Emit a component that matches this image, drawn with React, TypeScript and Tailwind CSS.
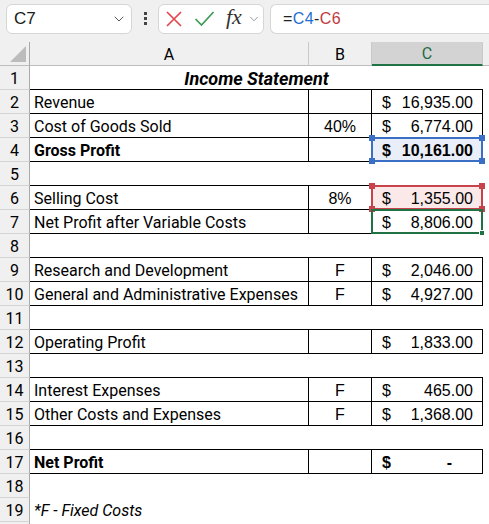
import { ChevronDown } from "lucide-react";

type Hl = "blue" | "red" | "green";

type Row = {
  n: number;
  a?: string;
  b?: string;
  c?: string;
  bold?: boolean;
  italic?: boolean;
  border?: boolean;
  title?: boolean;
  hl?: Hl;
};

const rows: Row[] = [
  { n: 1, a: "Income Statement", title: true },
  { n: 2, a: "Revenue", c: "16,935.00", border: true },
  { n: 3, a: "Cost of Goods Sold", b: "40%", c: "6,774.00", border: true },
  { n: 4, a: "Gross Profit", c: "10,161.00", bold: true, border: true, hl: "blue" },
  { n: 5 },
  { n: 6, a: "Selling Cost", b: "8%", c: "1,355.00", border: true, hl: "red" },
  { n: 7, a: "Net Profit after Variable Costs", c: "8,806.00", border: true, hl: "green" },
  { n: 8 },
  { n: 9, a: "Research and Development", b: "F", c: "2,046.00", border: true },
  { n: 10, a: "General and Administrative Expenses", b: "F", c: "4,927.00", border: true },
  { n: 11 },
  { n: 12, a: "Operating Profit", c: "1,833.00", border: true },
  { n: 13 },
  { n: 14, a: "Interest Expenses", b: "F", c: "465.00", border: true },
  { n: 15, a: "Other Costs and Expenses", b: "F", c: "1,368.00", border: true },
  { n: 16 },
  { n: 17, a: "Net Profit", c: "-", bold: true, border: true },
  { n: 18 },
  { n: 19, a: "*F - Fixed Costs", italic: true },
];

const label = "font-['Roboto','Liberation_Sans',sans-serif] text-[16px] text-black";
const num = "font-['Liberation_Sans',Arial,sans-serif] text-[16px] text-black";

function Handle({ pos, color }: { pos: string; color: string }) {
  return <span className={`absolute w-[6px] h-[6px] ${pos} ${color}`} />;
}

function Highlight({ kind }: { kind: Hl }) {
  if (kind === "blue") {
    return (
      <div className="absolute -left-px -top-px -right-px -bottom-px border-2 border-[#3b6fc6] bg-[#e9eef8] pointer-events-none">
        <Handle pos="-left-[4px] -top-[4px]" color="bg-[#3b6fc6]" />
        <Handle pos="-right-[4px] -top-[4px]" color="bg-[#3b6fc6]" />
        <Handle pos="-left-[4px] -bottom-[4px]" color="bg-[#3b6fc6]" />
        <Handle pos="-right-[4px] -bottom-[4px]" color="bg-[#3b6fc6]" />
      </div>
    );
  }
  if (kind === "red") {
    return (
      <div className="absolute -left-px -top-px -right-px -bottom-px border-2 border-[#c7424b] bg-[#fbe9e9] pointer-events-none">
        <Handle pos="-left-[4px] -top-[4px]" color="bg-[#c7424b]" />
        <Handle pos="-right-[4px] -top-[4px]" color="bg-[#c7424b]" />
        <Handle pos="-left-[4px] -bottom-[4px]" color="bg-[#c7424b]" />
        <Handle pos="-right-[4px] -bottom-[4px]" color="bg-[#c7424b]" />
      </div>
    );
  }
  return (
    <div className="absolute -left-px -top-px -right-px -bottom-px border-2 border-[#1f7244] pointer-events-none">
      <Handle pos="-right-[4px] -bottom-[4px]" color="bg-[#1f7244] border border-white" />
    </div>
  );
}

function FormulaBar() {
  return (
    <div className="h-[36px] flex items-center px-[6px] pt-[1px]">
      {/* name box */}
      <div className="w-[126px] h-[30px] bg-white border border-[#d6d6d6] rounded-[6px] flex items-center justify-between pl-[7px] pr-[4px]">
        <span className="font-['Liberation_Sans',Arial,sans-serif] text-[17px] text-[#1a1a1a]">C7</span>
        <ChevronDown size={16} strokeWidth={1.5} className="text-[#555]" />
      </div>
      <div className="flex flex-col gap-[2px] ml-[12px] mr-[11px]">
        <span className="w-[3px] h-[3px] bg-[#444]" />
        <span className="w-[3px] h-[3px] bg-[#444]" />
        <span className="w-[3px] h-[3px] bg-[#444]" />
      </div>
      <div className="w-[106px] h-[30px] bg-white border border-[#d6d6d6] rounded-[6px] flex items-center gap-[11px] pl-[6px] overflow-hidden">
        <svg width="18" height="18" viewBox="0 0 18 18" className="shrink-0">
          <path d="M2 2 L16 16 M16 2 L2 16" stroke="#e2474b" strokeWidth="1.7" fill="none" />
        </svg>
        <svg width="21" height="17" viewBox="0 0 21 17" className="shrink-0">
          <path d="M1.5 9 L7.5 15 L19.5 2" stroke="#3a9b55" strokeWidth="1.7" fill="none" />
        </svg>
        <span className="font-['Liberation_Serif',serif] italic text-[22px] text-[#333] leading-none -mt-[3px] shrink-0">fx</span>
        <ChevronDown size={14} strokeWidth={1.3} className="text-[#777] shrink-0 -ml-[6px]" />
      </div>
      <div className="flex-1 h-[30px] ml-[6px] bg-white border border-[#d6d6d6] rounded-l-[6px] border-r-0 -mr-[6px] flex items-center pl-[12px]">
        <span className="font-['Liberation_Sans',Arial,sans-serif] text-[16px] tracking-[0.4px]">
          <span className="text-[#222]">=</span>
          <span className="text-[#1f6fd0]">C4</span>
          <span className="text-[#222]">-</span>
          <span className="text-[#c23a3f]">C6</span>
        </span>
      </div>
    </div>
  );
}

function ColumnHeaders() {
  const hdr = `${label} h-full flex items-center justify-center pt-[2px] border-r border-[#c9c9c9] border-b border-b-[#bdbdbd]`;
  return (
    <div className="flex h-[30px] pt-[6px]">
      <div className="w-[30px] shrink-0 relative border-r border-[#a9a9a9] border-b border-b-[#bdbdbd]">
        <svg width="16" height="16" viewBox="0 0 16 16" className="absolute left-[10px] bottom-[3px]">
          <path d="M16 0 L16 16 L0 16 Z" fill="#bcbcbc" />
        </svg>
      </div>
      <div className={`w-[279px] shrink-0 ${hdr}`}>A</div>
      <div className={`w-[63px] shrink-0 ${hdr}`}>B</div>
      <div className="w-[111px] shrink-0 h-full flex items-center justify-center pt-[2px] bg-[#d3d3d3] border-r border-[#c9c9c9] border-b-2 border-b-[#1f7244] font-['Roboto',sans-serif] text-[16px] text-[#1c6b42]">
        C
      </div>
      <div className="flex-1 border-b border-b-[#bdbdbd]" />
    </div>
  );
}

function DataRow({ row, next }: { row: Row; next?: Row }) {
  const bottom = row.border || next?.border;
  const hb = bottom ? "border-b border-black" : "";
  const vr = row.border ? "border-r border-black" : "";
  const weight = row.bold ? "font-bold" : "";

  return (
    <div className="flex h-[24px]">
      <div className={`w-[30px] shrink-0 flex items-center justify-center pt-[2px] bg-[#f0f0f0] border-r border-[#a9a9a9] border-b border-b-[#d4d4d4] ${label} text-[#222]`}>
        {row.n}
      </div>
      {row.title ? (
        <div className={`w-[453px] shrink-0 flex items-center justify-center pt-[2px] ${hb} ${label} text-[18px] font-bold italic`}>
          {row.a}
        </div>
      ) : (
        <>
          <div className={`w-[279px] shrink-0 flex items-center pl-[4px] pt-[2px] ${hb} ${vr} ${label} ${weight} ${row.italic ? "italic" : ""}`}>
            {row.a}
          </div>
          <div className={`w-[63px] shrink-0 flex items-center justify-center pt-[2px] ${hb} ${vr} ${num}`}>
            {row.b}
          </div>
          <div className={`w-[111px] shrink-0 relative ${hb} ${vr}`}>
            {row.hl && <Highlight kind={row.hl} />}
            {row.c && (
              <div className={`relative h-full flex items-center justify-between pt-[2px] pl-[10px] ${row.c === "-" ? "pr-[30px]" : "pr-[9px]"} ${num} ${weight}`}>
                <span>$</span>
                <span>{row.c}</span>
              </div>
            )}
          </div>
        </>
      )}
      <div className="flex-1" />
    </div>
  );
}

export default function App() {
  return (
    <div className="w-[489px] h-[524px] overflow-hidden bg-[#f0f0f0] select-none">
      <FormulaBar />
      <ColumnHeaders />
      <div className="bg-white">
        {rows.map((r, i) => (
          <DataRow key={r.n} row={r} next={rows[i + 1]} />
        ))}
        <div className="flex h-[24px]">
          <div className="w-[30px] shrink-0 bg-[#f0f0f0] border-r border-[#a9a9a9]" />
          <div className="flex-1" />
        </div>
      </div>
    </div>
  );
}
